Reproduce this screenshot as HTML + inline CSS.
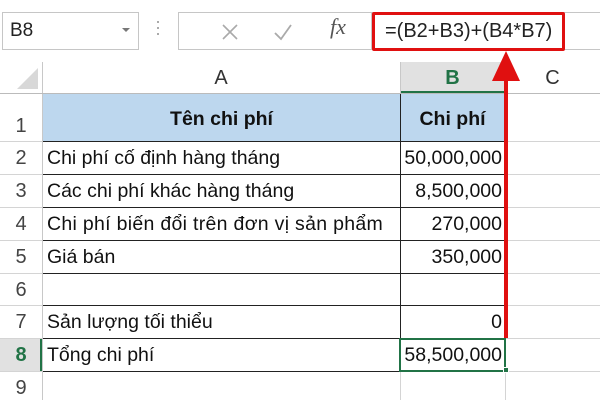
<!DOCTYPE html>
<html><head><meta charset="utf-8"><style>
*{margin:0;padding:0;box-sizing:border-box}
body{width:600px;height:400px;overflow:hidden;background:#fff;font-family:"Liberation Sans","DejaVu Sans",sans-serif;position:relative}
.a{position:absolute}
.t{position:absolute;font-size:19.5px;color:#111;white-space:nowrap;line-height:32px}
.rh{position:absolute;left:0;width:42px;text-align:center;font-size:20px;color:#444;line-height:32px}
.hl{position:absolute;height:1px;background:#d4d4d4}
.bl{position:absolute;height:1px;background:#222}
</style></head><body>
<!-- toolbar -->
<div class="a" style="left:2px;top:12px;width:137px;height:38px;border:1px solid #c6c6c6"></div>
<div class="t" style="left:10px;top:15px;font-size:19px;color:#222">B8</div>
<div class="a" style="left:122px;top:28px;width:0;height:0;border-left:4px solid transparent;border-right:4px solid transparent;border-top:4px solid #777"></div>
<div class="a" style="left:157px;top:21px;width:2px;height:2px;background:#aaa;box-shadow:0 6px #aaa,0 12px #aaa"></div>
<div class="a" style="left:178px;top:12px;width:194px;height:38px;border:1px solid #c6c6c6"></div>
<svg class="a" style="left:220px;top:22px" width="20" height="20"><path d="M3 3L17 17M17 3L3 17" stroke="#aaa" stroke-width="1.6"/></svg>
<svg class="a" style="left:272px;top:22px" width="22" height="20"><path d="M3 11L9 17L19 3" stroke="#aaa" stroke-width="1.8" fill="none"/></svg>
<div class="a" style="left:330px;top:14px;font-family:'Liberation Serif',serif;font-style:italic;font-size:22px;color:#555">fx</div>
<div class="a" style="left:371px;top:12px;width:229px;height:38px;border-top:1px solid #c6c6c6;border-bottom:1px solid #c6c6c6"></div>
<div class="a" style="left:372px;top:12px;width:193px;height:39px;border:3px solid #e01010;border-radius:2px"></div>
<div class="a" style="left:385px;top:16px;color:#222;font-size:20px;line-height:30px;white-space:nowrap">=(B2+B3)+(B4*B7)</div>
<!-- column headers -->
<svg class="a" style="left:17px;top:68px" width="22" height="22"><path d="M21 0V21H0Z" fill="#d8d8d8"/></svg>
<div class="a" style="left:400px;top:62px;width:105px;height:31px;background:#e1e1e1;border-bottom:2px solid #217346"></div>
<div class="t" style="left:42px;width:358px;top:62px;text-align:center;color:#333;font-size:20px">A</div>
<div class="t" style="left:400px;width:105px;top:62px;text-align:center;color:#217346;font-weight:bold;font-size:20px">B</div>
<div class="t" style="left:505px;width:95px;top:62px;text-align:center;color:#333;font-size:20px">C</div>
<div class="a" style="left:42px;top:62px;width:1px;height:338px;background:#c8c8c8"></div>
<div class="a" style="left:400px;top:62px;width:1px;height:31px;background:#c8c8c8"></div>
<div class="a" style="left:505px;top:62px;width:1px;height:338px;background:#d4d4d4"></div>
<div class="hl" style="left:0;top:93px;width:600px;background:#bbb"></div>
<!-- row 1 -->
<div class="a" style="left:43px;top:94px;width:462px;height:47px;background:#bdd7ee"></div>
<div class="a" style="left:400px;top:94px;width:1px;height:277px;background:#222"></div>
<div class="t" style="left:43px;width:357px;top:103px;text-align:center;font-weight:bold">Tên chi phí</div>
<div class="t" style="left:400px;width:105px;top:103px;text-align:center;font-weight:bold">Chi phí</div>
<div class="rh" style="top:110px">1</div>
<!-- grid lines -->
<div class="hl" style="left:0;top:141px;width:42px"></div><div class="bl" style="left:43px;top:141px;width:462px"></div><div class="hl" style="left:505px;top:141px;width:95px"></div>
<div class="hl" style="left:0;top:174px;width:42px"></div><div class="bl" style="left:43px;top:174px;width:462px"></div><div class="hl" style="left:505px;top:174px;width:95px"></div>
<div class="hl" style="left:0;top:207px;width:42px"></div><div class="bl" style="left:43px;top:207px;width:462px"></div><div class="hl" style="left:505px;top:207px;width:95px"></div>
<div class="hl" style="left:0;top:240px;width:42px"></div><div class="bl" style="left:43px;top:240px;width:462px"></div><div class="hl" style="left:505px;top:240px;width:95px"></div>
<div class="hl" style="left:0;top:273px;width:42px"></div><div class="bl" style="left:43px;top:273px;width:462px"></div><div class="hl" style="left:505px;top:273px;width:95px"></div>
<div class="hl" style="left:0;top:305px;width:42px"></div><div class="bl" style="left:43px;top:305px;width:462px"></div><div class="hl" style="left:505px;top:305px;width:95px"></div>
<div class="hl" style="left:0;top:338px;width:42px"></div><div class="bl" style="left:43px;top:338px;width:462px"></div><div class="hl" style="left:505px;top:338px;width:95px"></div>
<div class="hl" style="left:0;top:371px;width:42px"></div><div class="bl" style="left:43px;top:371px;width:462px"></div><div class="hl" style="left:505px;top:371px;width:95px"></div>
<div class="a" style="left:400px;top:371px;width:1px;height:29px;background:#d4d4d4"></div>
<!-- rows -->
<div class="rh" style="top:142px">2</div><div class="t" style="left:47px;top:142px">Chi phí cố định hàng tháng</div><div class="t" style="left:400px;width:102px;top:142px;text-align:right">50,000,000</div>
<div class="rh" style="top:175px">3</div><div class="t" style="left:47px;top:175px">Các chi phí khác hàng tháng</div><div class="t" style="left:400px;width:102px;top:175px;text-align:right">8,500,000</div>
<div class="rh" style="top:208px">4</div><div class="t" style="left:47px;top:208px;letter-spacing:0.3px">Chi phí biến đổi trên đơn vị sản phẩm</div><div class="t" style="left:400px;width:102px;top:208px;text-align:right">270,000</div>
<div class="rh" style="top:241px">5</div><div class="t" style="left:47px;top:241px">Giá bán</div><div class="t" style="left:400px;width:102px;top:241px;text-align:right">350,000</div>
<div class="rh" style="top:274px">6</div>
<div class="rh" style="top:306px">7</div><div class="t" style="left:47px;top:306px">Sản lượng tối thiểu</div><div class="t" style="left:400px;width:102px;top:306px;text-align:right">0</div>
<div class="a" style="left:0;top:339px;width:42px;height:32px;background:#e1e1e1;border-right:2px solid #217346"></div>
<div class="rh" style="top:339px;color:#217346;font-weight:bold">8</div><div class="t" style="left:47px;top:339px">Tổng chi phí</div>
<div class="a" style="left:399px;top:338px;width:107px;height:34px;border:2px solid #217346"></div>
<div class="t" style="left:400px;width:102px;top:339px;text-align:right">58,500,000</div>
<div class="a" style="left:503px;top:367px;width:6px;height:6px;background:#217346;border:1px solid #fff"></div>
<div class="rh" style="top:372px">9</div>
<!-- arrow -->
<div class="a" style="left:504px;top:78px;width:4px;height:260px;background:#e01010"></div>
<svg class="a" style="left:490px;top:51px" width="32" height="31"><path d="M16 0L30 30H2Z" fill="#e01010"/></svg>
</body></html>
